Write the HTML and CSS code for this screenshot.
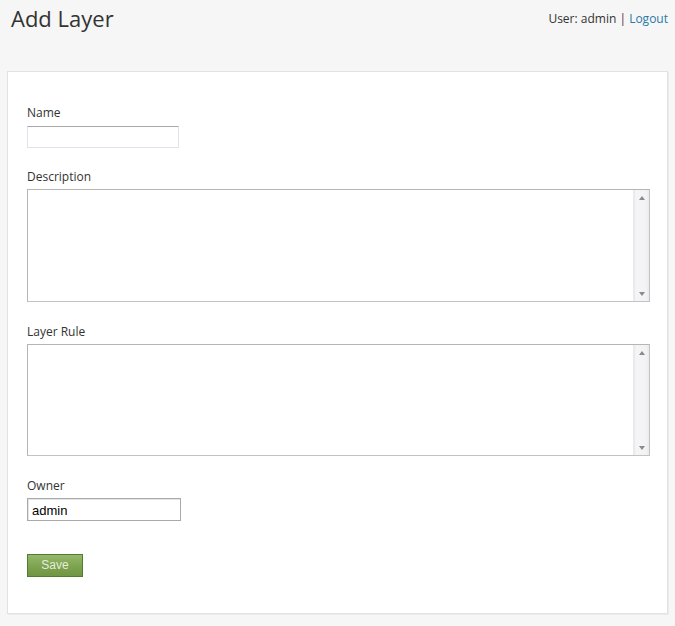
FILE: index.html
```html
<!DOCTYPE html>
<html>
<head>
<meta charset="utf-8">
<link rel="stylesheet" href="styles.css">
</head>
<body>
<header class="topbar">
  <h1 class="title">Add Layer</h1>
  <div class="user">User: admin <span class="sep">|</span> <a href="#" class="logout">Logout</a></div>
</header>
<main class="panel">
  <form class="form">
    <div class="field field-name">
      <label class="label">Name</label>
      <input class="input-name" type="text">
    </div>
    <div class="field field-desc">
      <label class="label">Description</label>
      <div class="area">
        <textarea class="area-text"></textarea>
        <div class="scroll"><span class="arrow up"></span><span class="arrow down"></span></div>
      </div>
    </div>
    <div class="field field-rule">
      <label class="label">Layer Rule</label>
      <div class="area area-rule">
        <textarea class="area-text"></textarea>
        <div class="scroll"><span class="arrow up"></span><span class="arrow down"></span></div>
      </div>
    </div>
    <div class="field field-owner">
      <label class="label">Owner</label>
      <input class="input-owner" type="text" value="admin">
    </div>
    <button class="save" type="button">Save</button>
  </form>
</main>
</body>
</html>
```
FILE: styles.css
```css
html, body {
  margin: 0;
  padding: 0;
  background: #f6f6f6;
  font-family: "Open Sans", "Noto Sans", sans-serif;
  color: #333;
}
.topbar {
  display: flex;
  justify-content: space-between;
  align-items: flex-start;
  padding: 0 7px 0 11px;
  height: 70px;
}
.title {
  margin: 0;
  font-weight: 400;
  font-size: 22px;
  line-height: 30px;
  padding-top: 3px;
  color: #333;
}
.user {
  font-size: 12px;
  line-height: 16px;
  padding-top: 11px;
  color: #333;
}
.sep { color: #5a2a3a; }
.logout { color: #2a7aa6; text-decoration: none; }
.panel {
  margin: 1px 7px 12px 7px;
  background: #fff;
  border: 1px solid #e2e2e2;
  box-shadow: 1px 1px 0 #ececec;
  height: 543px;
  box-sizing: border-box;
}
.form {
  display: flex;
  flex-direction: column;
  align-items: flex-start;
  padding: 33px 17px 0 19px;
}
.field {
  display: flex;
  flex-direction: column;
  align-items: flex-start;
  align-self: stretch;
}
.label {
  font-size: 12px;
  line-height: 16px;
  color: #333;
  margin-bottom: 5px;
}
.input-name {
  width: 152px;
  height: 22px;
  box-sizing: border-box;
  margin: 0;
  border: 1px solid #e2e2ee;
  border-top-color: #a8a8a8;
  background: #fff;
  padding: 0;
  margin-bottom: 21px;
}
.field-desc .label,
.field-rule .label,
.field-owner .label { margin-bottom: 4px; }
.area {
  display: flex;
  align-self: stretch;
  height: 113px;
  box-sizing: border-box;
  border: 1px solid #a9a9a9;
  border-color: #b5b5b5 #c3c3c3 #c3c3c3 #b5b5b5;
  background: #fff;
  margin-bottom: 22px;
}
.area-rule { height: 112px; margin-bottom: 22px; }
.area-text {
  flex: 1;
  border: 0;
  margin: 0;
  padding: 0;
  resize: none;
  outline: none;
}
.scroll {
  width: 16px;
  background: linear-gradient(90deg, #e8e8ec 0, #f5f5f7 2px, #f3f3f5 12px, #e6e6ea 16px);
  border-left: 1px solid #eaeaea;
  display: flex;
  flex-direction: column;
  justify-content: space-between;
  align-items: center;
  padding: 6px 0 5px;
  box-sizing: border-box;
}
.arrow {
  width: 0;
  height: 0;
  border-left: 3px solid transparent;
  border-right: 3px solid transparent;
}
.arrow.up { border-bottom: 4px solid #8a8a8a; }
.arrow.down { border-top: 4px solid #8a8a8a; }
.input-owner {
  width: 154px;
  height: 23px;
  box-sizing: border-box;
  margin: 0 0 33px;
  border: 1px solid #a9a9a9;
  box-shadow: inset 1px 1px 0 #e4e4e4;
  padding: 1px 4px 0;
  font-family: "Liberation Sans", Arial, sans-serif;
  font-size: 13px;
  color: #000;
  background: #fff;
}
.save {
  width: 56px;
  height: 23px;
  margin: 0;
  padding: 0;
  border: 1px solid #4f7f2c;
  background: linear-gradient(180deg, #95b86a 0%, #7fa452 50%, #6f9643 100%);
  color: #e4eddb;
  font-family: "Liberation Sans", Arial, sans-serif;
  font-size: 12px;
  line-height: 21px;
}
```
